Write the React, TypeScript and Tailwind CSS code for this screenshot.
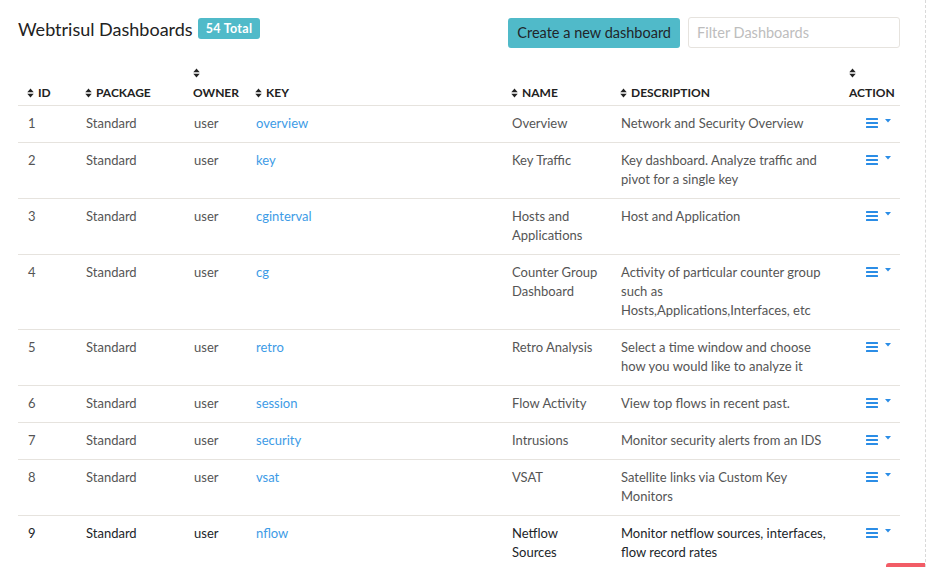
import React from "react";

type Row = { id: number; pkg: string; owner: string; key: string; name: string; desc: string };

const rows: Row[] = [
  { id: 1, pkg: "Standard", owner: "user", key: "overview", name: "Overview", desc: "Network and Security Overview" },
  { id: 2, pkg: "Standard", owner: "user", key: "key", name: "Key Traffic", desc: "Key dashboard. Analyze traffic and pivot for a single key" },
  { id: 3, pkg: "Standard", owner: "user", key: "cginterval", name: "Hosts and Applications", desc: "Host and Application" },
  { id: 4, pkg: "Standard", owner: "user", key: "cg", name: "Counter Group Dashboard", desc: "Activity of particular counter group such as Hosts,Applications,Interfaces, etc" },
  { id: 5, pkg: "Standard", owner: "user", key: "retro", name: "Retro Analysis", desc: "Select a time window and choose how you would like to analyze it" },
  { id: 6, pkg: "Standard", owner: "user", key: "session", name: "Flow Activity", desc: "View top flows in recent past." },
  { id: 7, pkg: "Standard", owner: "user", key: "security", name: "Intrusions", desc: "Monitor security alerts from an IDS" },
  { id: 8, pkg: "Standard", owner: "user", key: "vsat", name: "VSAT", desc: "Satellite links via Custom Key Monitors" },
  { id: 9, pkg: "Standard", owner: "user", key: "nflow", name: "Netflow Sources", desc: "Monitor netflow sources, interfaces, flow record rates" },
];

function SortIcon() {
  return (
    <svg width="7" height="10" viewBox="0 0 7 10" className="inline-block mr-[4px] -mt-[2px] align-middle">
      <path d="M0.3 4.2 L3.5 0.6 L6.7 4.2 Z" fill="#222" />
      <path d="M0.3 5.8 L3.5 9.4 L6.7 5.8 Z" fill="#222" />
    </svg>
  );
}

function ActionMenu() {
  return (
    <span className="inline-flex items-center gap-[7px] pl-[16px]">
      <svg width="12" height="10" viewBox="0 0 12 10">
        <rect x="0" y="0" width="12" height="2" rx="0.5" fill="#2b8de6" />
        <rect x="0" y="4" width="12" height="2" rx="0.5" fill="#2b8de6" />
        <rect x="0" y="8" width="12" height="2" rx="0.5" fill="#2b8de6" />
      </svg>
      <svg width="6" height="4" viewBox="0 0 6 4" className="-mt-[4px]">
        <path d="M0 0 L6 0 L3 3.5 Z" fill="#2b8de6" />
      </svg>
    </span>
  );
}

export default function App() {
  return (
    <div className="relative w-[926px] h-[567px] overflow-hidden bg-white border-r border-dashed border-[#d9d9d9] font-['Lato',sans-serif]">
      <div className="pl-[18px] pr-[25px] pt-[17px]">
        {/* Title + controls */}
        <div className="flex items-start justify-between">
          <div className="flex items-center gap-[5px] pt-[1px]">
            <h1 className="text-[18px] leading-[20px] text-[#222]">Webtrisul Dashboards</h1>
            <span className="bg-[#50bac9] text-white text-[12.5px] font-bold rounded-[3px] px-[8px] h-[21px] leading-[21px] tracking-[0.3px]">
              54 Total
            </span>
          </div>
          <div className="flex items-center gap-[8px]">
            <button className="h-[30px] mt-[1px] px-[9px] bg-[#50bac9] rounded-[3px] text-[14.5px] text-[#212529]">
              Create a new dashboard
            </button>
            <input
              placeholder="Filter Dashboards"
              className="w-[212px] h-[31px] border border-[#e6e3de] rounded-[3px] px-[8px] text-[14.5px] placeholder:text-[#bdbdbd] outline-none"
            />
          </div>
        </div>

        {/* Table */}
        <table className="table-fixed w-[882px] mt-[15px] border-collapse text-[13px] leading-[19px]">
          <colgroup>
            <col className="w-[58px]" />
            <col className="w-[108px]" />
            <col className="w-[62px]" />
            <col className="w-[256px]" />
            <col className="w-[109px]" />
            <col className="w-[229px]" />
            <col className="w-[60px]" />
          </colgroup>
          <thead>
            <tr className="border-b border-[#e6e3de] text-[12px] font-bold text-[#222] uppercase">
              <th className="text-left align-bottom px-[9px] pb-[2px] leading-[20px]"><SortIcon />ID</th>
              <th className="text-left align-bottom px-[9px] pb-[2px] leading-[20px]"><SortIcon />Package</th>
              <th className="text-left align-bottom px-[9px] pb-[2px] leading-[20px]"><SortIcon /><br />Owner</th>
              <th className="text-left align-bottom px-[9px] pb-[2px] leading-[20px]"><SortIcon />Key</th>
              <th className="text-left align-bottom px-[9px] pb-[2px] leading-[20px]"><SortIcon />Name</th>
              <th className="text-left align-bottom px-[9px] pb-[2px] leading-[20px]"><SortIcon />Description</th>
              <th className="text-left align-bottom px-[9px] pb-[2px] leading-[20px]"><SortIcon /><br />Action</th>
            </tr>
          </thead>
          <tbody>
            {rows.map((r) => {
              const hover = r.id === 9;
              return (
                <tr key={r.id} className={`border-b border-[#e6e3de] align-top ${hover ? "text-[#212529]" : "text-[#555]"}`}>
                  <td className="px-[10px] pt-[8px] pb-[9px]">{r.id}</td>
                  <td className="px-[10px] pt-[8px] pb-[9px]">{r.pkg}</td>
                  <td className="px-[10px] pt-[8px] pb-[9px]">{r.owner}</td>
                  <td className="px-[10px] pt-[8px] pb-[9px] text-[#3d9be6]">{r.key}</td>
                  <td className="px-[10px] pt-[8px] pb-[9px]">{r.name}</td>
                  <td className="px-[10px] pt-[8px] pb-[9px]">{r.desc}</td>
                  <td className="px-[10px] pt-[8px] pb-[9px]"><ActionMenu /></td>
                </tr>
              );
            })}
          </tbody>
        </table>
      </div>

      {/* partially visible notification tab */}
      <div className="absolute right-0 bottom-0 w-[39px] h-[4px] bg-[#f25c66] rounded-tl-[3px]" />
    </div>
  );
}
